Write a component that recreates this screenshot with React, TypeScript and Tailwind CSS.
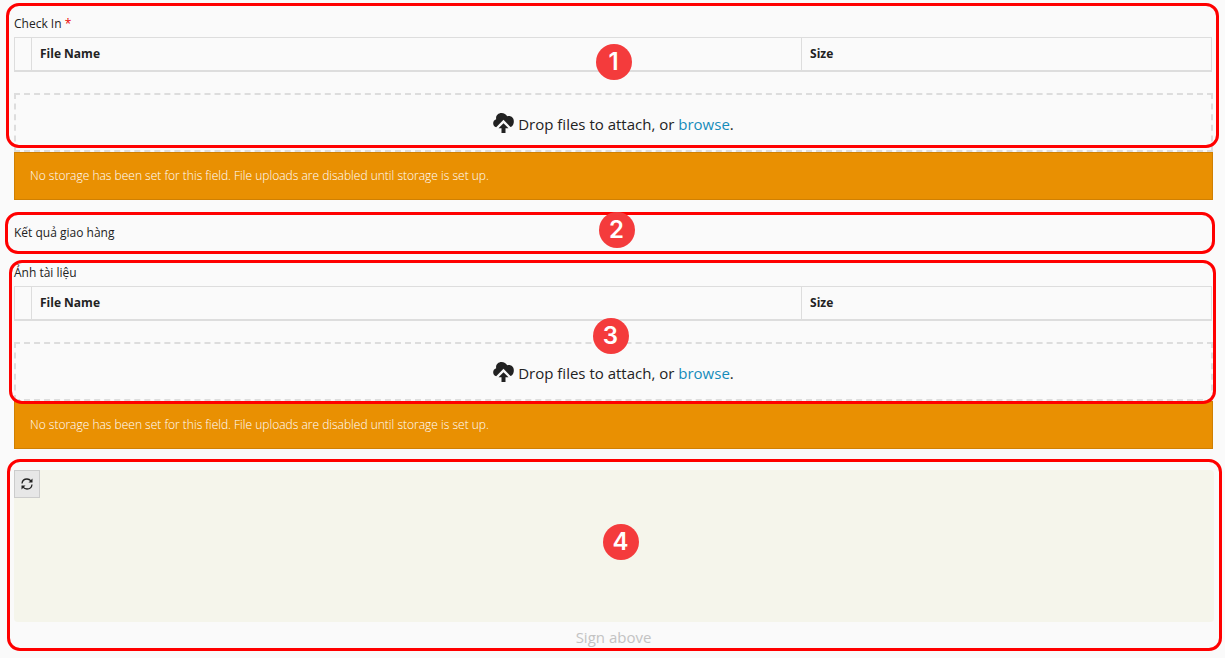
import type { ReactNode } from "react";

const warning =
  "No storage has been set for this field. File uploads are disabled until storage is set up.";

function CloudUploadIcon() {
  return (
    <svg viewBox="0 0 62 60" className="h-5 w-[21px] fill-current" aria-hidden="true">
      <path d="M9 43C4 42 0 37 0 31C0 25 3 21 9 19C7 8 15 0 25 0C33 0 39 4 42 10C53 7 62 14 62 25C62 35 57 42 52 42L31 20Z" />
      <path d="M31 31L46 46H37V60H25V46H16Z" />
    </svg>
  );
}

function RefreshIcon() {
  return (
    <svg viewBox="0 0 12 12" className="size-3" aria-hidden="true">
      <path
        d="M1 5.5C1.3 2.8 3.4 1 6 1C7.6 1 8.9 1.6 9.9 2.9M11 6.5C10.7 9.2 8.6 11 6 11C4.4 11 3.1 10.4 2.1 9.1"
        fill="none"
        stroke="currentColor"
        strokeWidth="1.3"
      />
      <path d="M11.5 0.5V4.5H7.5ZM0.5 11.5V7.5H4.5Z" fill="currentColor" />
    </svg>
  );
}

function Outline({ place }: { place: string }) {
  return (
    <div
      className={`pointer-events-none absolute rounded-[13px] border-3 border-[#ff0000] ${place}`}
    />
  );
}

function Badge({ place, children }: { place: string; children: ReactNode }) {
  return (
    <span
      className={`absolute left-1/2 flex size-9 items-center justify-center rounded-full bg-[#f43b3c] font-[Inter,sans-serif] text-2xl font-semibold text-white ${place}`}
    >
      {children}
    </span>
  );
}

function FileField({ label, required }: { label: string; required?: boolean }) {
  return (
    <>
      <h2 className="text-xs leading-[18px]">
        {label} {required && <span className="text-[#eb0000]">*</span>}
      </h2>
      <div className="mt-1 h-[35px] pr-px">
        <table
          aria-label={label}
          className="w-full table-fixed border-collapse border border-[#dddddd] text-left text-xs leading-4"
        >
          <colgroup>
            <col className="w-[17px]" />
            <col />
            <col className="w-[34.25%]" />
          </colgroup>
          <thead>
            <tr className="h-[33px] border-b-2 border-[#dddddd]">
              <td />
              <th scope="col" className="border-l border-[#dddddd] px-2 font-bold">
                File Name
              </th>
              <th scope="col" className="border-l border-[#dddddd] px-2 font-bold">
                Size
              </th>
            </tr>
          </thead>
        </table>
      </div>
      <div className="mt-[21px] flex h-[59px] items-center justify-center gap-1 border-2 border-dashed border-[#dddddd] text-[15px] leading-6">
        <CloudUploadIcon />
        <p className="pt-0.5">
          Drop files to attach, or{" "}
          <a href="#browse" className="text-[#158cba]">
            browse
          </a>
          .
        </p>
      </div>
      <p
        role="alert"
        className="flex h-12 items-center border border-[#d08002] bg-[#e99002] px-[15px] text-xs font-light text-white"
      >
        {warning}
      </p>
    </>
  );
}

export default function App() {
  return (
    <main className="min-h-screen overflow-hidden bg-[#fafafa] pt-[15px] pr-3 pb-2 pl-[14px] font-['Open_Sans',sans-serif] text-[#222222]">
      <section className="relative">
        <FileField label="Check In" required />
        <Outline place="-top-3 bottom-[52px] -left-2 -right-1.5" />
        <Badge place="top-[29px] -ml-[18px]">1</Badge>
      </section>

      <section className="relative mt-6">
        <h2 className="text-xs leading-[18px]">Kết quả giao hàng</h2>
        <Outline place="-top-3 -bottom-3 -left-[9px] -right-0.5" />
        <Badge place="-top-3 -ml-[15px]">2</Badge>
      </section>

      <section className="relative mt-[22px]">
        <FileField label="Ảnh tài liệu" />
        <Outline place="-top-1 bottom-[45px] -left-[5px] -right-[3px]" />
        <Badge place="top-[54px] -ml-[21px]">3</Badge>
      </section>

      <section className="relative mt-[21px]">
        <div className="-mr-px h-[152px] rounded-sm bg-[#f5f5eb]">
          <button
            type="button"
            aria-label="Reset signature"
            className="flex h-7 w-[26px] items-center justify-center border border-[#cccccc] bg-[#e7e7e7]"
          >
            <RefreshIcon />
          </button>
        </div>
        <p className="mt-[3px] text-center text-[15px] leading-6 text-[#c3c3c3]">Sign above</p>
        <Outline place="-top-[11px] -bottom-0.5 -left-[7px] -right-[9px]" />
        <Badge place="top-[54px] -ml-[11px]">4</Badge>
      </section>
    </main>
  );
}
